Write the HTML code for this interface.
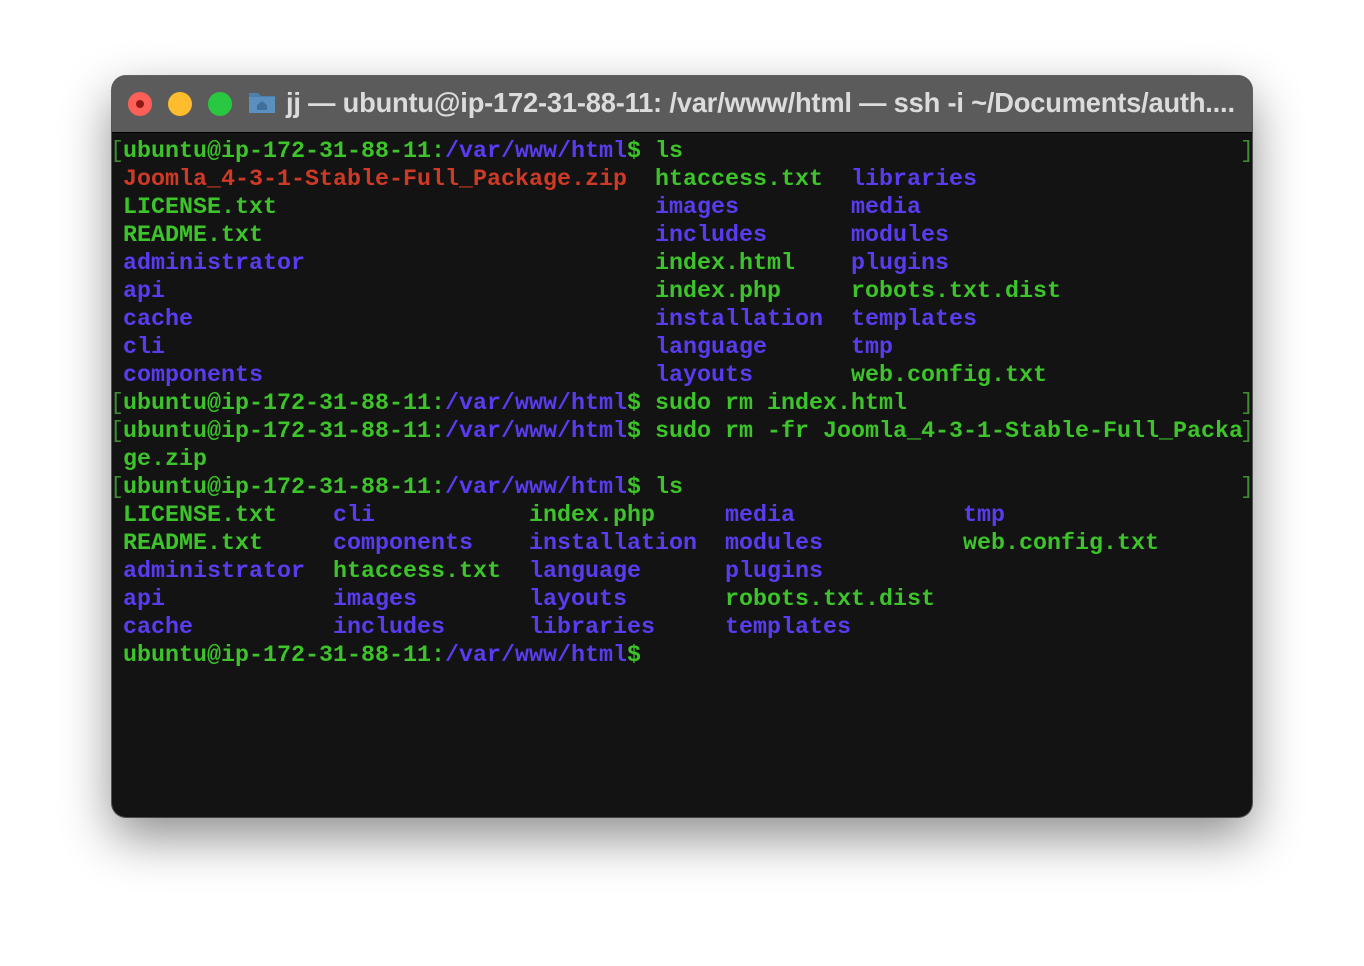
<!DOCTYPE html>
<html><head><style>
html,body{margin:0;padding:0;width:1364px;height:966px;background:#fff;overflow:hidden;}
.win{position:absolute;left:112px;top:76px;width:1140px;height:741px;border-radius:14px;background:#131313;overflow:hidden;box-shadow:0 20px 50px rgba(0,0,0,0.45),0 0 0 1px #6a6a6a;}
.tb{position:absolute;left:0;top:0;width:100%;height:56px;background:#5b5b5b;border-bottom:1px solid #000;}
.dot{position:absolute;top:16px;width:24px;height:24px;border-radius:50%;}
.title{position:absolute;left:174px;top:11px;color:#dcdcdc;font:bold 27.3px "Liberation Sans",sans-serif;white-space:nowrap;letter-spacing:-0.2px;}
pre{position:absolute;left:11px;top:62px;margin:0;font:bold 23.33px/28px "Liberation Mono",monospace;color:#3cc42a;}
.g{color:#3cc42a}.b{color:#5a3cf0}.r{color:#cf3a26}
.lb,.rb{position:absolute;color:#3f8a33;font:23.33px/28px "Liberation Mono",monospace;}
.lb{left:-2px}.rb{left:1128px}
</style></head><body>
<div class="win">
<div class="tb">
<div class="dot" style="left:16px;background:#fe5f57"><div style="position:absolute;left:8px;top:8px;width:8px;height:8px;border-radius:50%;background:#8e1a12"></div></div>
<div class="dot" style="left:56px;background:#febc2e"></div>
<div class="dot" style="left:96px;background:#28c840"></div>
<svg style="position:absolute;left:136px;top:14px" width="28" height="24" viewBox="0 0 28 24"><path d="M1 3h9l3 3h14v17H1z" fill="#4a7fae"/><path d="M1 7h26v16H1z" fill="#5b8fbf"/><path d="M9 15l5-4 5 4v5H9z" fill="#3f6f9a"/></svg>
<div class="title">jj — ubuntu@ip-172-31-88-11: /var/www/html — ssh -i ~/Documents/auth....</div>
</div>
<div class="lb" style="top:62px">[</div><div class="rb" style="top:62px">]</div>
<div class="lb" style="top:314px">[</div><div class="rb" style="top:314px">]</div>
<div class="lb" style="top:342px">[</div><div class="rb" style="top:342px">]</div>
<div class="lb" style="top:398px">[</div><div class="rb" style="top:398px">]</div>
<pre><span class="g">ubuntu@ip-172-31-88-11</span>:<span class="b">/var/www/html</span>$ ls
<span class="r">Joomla_4-3-1-Stable-Full_Package.zip</span>  htaccess.txt  <span class="b">libraries</span>
LICENSE.txt                           <span class="b">images</span>        <span class="b">media</span>
README.txt                            <span class="b">includes</span>      <span class="b">modules</span>
<span class="b">administrator</span>                         index.html    <span class="b">plugins</span>
<span class="b">api</span>                                   index.php     robots.txt.dist
<span class="b">cache</span>                                 <span class="b">installation</span>  <span class="b">templates</span>
<span class="b">cli</span>                                   <span class="b">language</span>      <span class="b">tmp</span>
<span class="b">components</span>                            <span class="b">layouts</span>       web.config.txt
ubuntu@ip-172-31-88-11:<span class="b">/var/www/html</span>$ sudo rm index.html
ubuntu@ip-172-31-88-11:<span class="b">/var/www/html</span>$ sudo rm -fr Joomla_4-3-1-Stable-Full_Packa
ge.zip
ubuntu@ip-172-31-88-11:<span class="b">/var/www/html</span>$ ls
LICENSE.txt    <span class="b">cli</span>           index.php     <span class="b">media</span>            <span class="b">tmp</span>
README.txt     <span class="b">components</span>    <span class="b">installation</span>  <span class="b">modules</span>          web.config.txt
<span class="b">administrator</span>  htaccess.txt  <span class="b">language</span>      <span class="b">plugins</span>
<span class="b">api</span>            <span class="b">images</span>        <span class="b">layouts</span>       robots.txt.dist
<span class="b">cache</span>          <span class="b">includes</span>      <span class="b">libraries</span>     <span class="b">templates</span>
ubuntu@ip-172-31-88-11:<span class="b">/var/www/html</span>$</pre>
</div>
</body></html>
